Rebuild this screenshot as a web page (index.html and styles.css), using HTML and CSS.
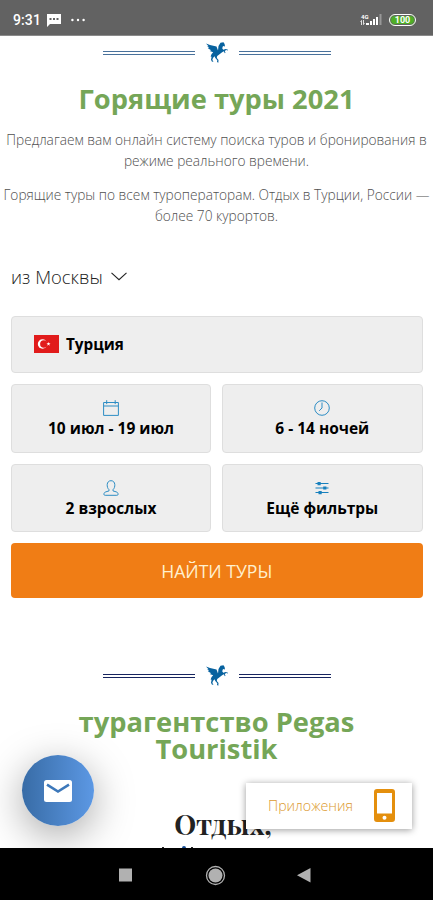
FILE: index.html
```html
<!DOCTYPE html>
<html lang="ru">
<head>
<meta charset="utf-8">
<meta name="viewport" content="width=device-width, initial-scale=1">
<title>Горящие туры 2021</title>
<link rel="stylesheet" href="styles.css">
</head>
<body>
<svg class="defs" aria-hidden="true">
  <symbol id="pegasus" viewBox="0 0 22 22">
    <path d="M0 1.500 4 3l6.500 1.500 1.500 4L12.500 4 14.500.8 17.500.2 18.600 2l.4 2.500-2-.5-.8 2.200 1 1.600 2.500-.9 2.300.9-.2.8-1.500-.5-1.600 1 .8 1.600-.6.5-1.300-2-1.800 1.300-2.600 2.100-2 1.400-.4 2.100 1.700 1.800-.2 2.800-1.300-.8.3-1.700-2-2.100-.8-1.800-1.500 1.800-.7 2 1.200 1.300-1.500.3-1-1.900.6-3-1-.3 1-2.500 1.600-1.800-3.500-1.300 1.500-.6-3.500-2.100 1.500-.3L1.200 4.500l1.300-.2z"/>
  </symbol>
</svg>
<div class="phone">
  <header class="status">
    <span class="time">9:31</span>
    <svg class="bubble" viewBox="0 0 14 13"><path fill="#fff" d="M0 0h14v10H3L0 13z"/><path fill="#626262" d="M2.500 4h2v2h-2zm3.500 0h2v2H6zm3.500 0h2v2h-2z"/></svg>
    <svg class="dots" viewBox="0 0 14 4" fill="#fff"><circle cx="1.400" cy="2" r="1.200"/><circle cx="7" cy="2" r="1.200"/><circle cx="12.600" cy="2" r="1.200"/></svg>
    <div class="network"><span>4G</span><svg viewBox="0 0 5 5" stroke="#fff" stroke-width=".8" fill="none"><path d="M1.500 5V.5L.4 1.600M3.500 0v4.500l1.100-1.100"/></svg></div>
    <svg class="signal" viewBox="0 0 16 12" fill="#fff"><path d="M0 9h3v2H0zM4 7h2v4H4zM7 5h2v6H7zM10 3h2v8h-2z"/><path opacity=".35" d="M13.500 0h2v11h-2z"/></svg>
    <span class="battery">100</span>
  </header>

  <main class="page">
    <div class="divider soft"><i></i><svg><use href="#pegasus"/></svg><i></i></div>
    <h1 class="title">Горящие туры 2021</h1>
    <p class="lead first">Предлагаем вам онлайн систему поиска туров и бронирования в<br>режиме реального времени.</p>
    <p class="lead second">Горящие туры по всем туроператорам. Отдых в Турции, России —<br>более 70 курортов.</p>

    <div class="from"><span>из Москвы</span><svg viewBox="0 0 16 9" fill="none" stroke="#222" stroke-width="1.100"><path d="M.5.8 8 7.700 15.500.8"/></svg></div>

    <section class="search">
      <div class="field country">
        <svg class="flag" viewBox="0 0 25 18"><path fill="#e11b1b" d="M0 0h25v18H0z"/><circle cx="8.500" cy="9" r="4.700" fill="#fff"/><circle cx="9.900" cy="9" r="3.800" fill="#e11b1b"/><path fill="#fff" d="m14.500 6.900.5 1.400h1.500l-1.200.9.500 1.500-1.300-.9-1.300.9.500-1.500-1.200-.9H14z"/></svg>
        <b>Турция</b>
      </div>
      <div class="field option">
        <svg class="icon" viewBox="0 0 16 16"><path d="M.6 2.500h14.800v12.900H.6zM.6 6h14.800M3.700.2v3.900M12.200.2v3.900"/></svg>
        <b>10 июл - 19 июл</b>
      </div>
      <div class="field option">
        <svg class="icon" viewBox="0 0 16 16"><circle cx="8" cy="8" r="7.300"/><path d="M8 2.500V8L5.200 10.800"/></svg>
        <b>6 - 14 ночей</b>
      </div>
      <div class="field option">
        <svg class="icon" viewBox="0 0 16 16"><path d="M6 9.700C3.400 7.500 3.200.7 8 .7s4.600 6.800 2 9v1.200l3.300 1c1.500.5 1.800 1.600 1.800 2.400 0 .7-.5 1-1.300 1H2.200c-.8 0-1.300-.3-1.300-1 0-.8.3-1.900 1.800-2.400l3.300-1z"/></svg>
        <b>2 взрослых</b>
      </div>
      <div class="field option">
        <svg class="icon filters" viewBox="0 0 16 16"><path d="M1.500 3.500h13M1.500 8h13M1.500 12.500h13"/><path class="knob" d="M3.500 2h3.200v3.200H3.500zm5.700 4.400h3.200v3.200H9.200zM4.500 11h3.200v3.200H4.500z"/></svg>
        <b>Ещё фильтры</b>
      </div>
      <button class="find">НАЙТИ ТУРЫ</button>
    </section>

    <div class="divider lower"><i></i><svg><use href="#pegasus"/></svg><i></i></div>
    <h2 class="title agency">турагентство Pegas<br>Touristik</h2>
    <div class="rest">Отдых,</div>
    <svg class="peek" viewBox="0 0 32 3"><path fill="#222" d="M0 2h2v1H0zM29 2h2v1h-2z"/><path fill="#124a94" d="M20 3a2 2 0 0 1 4 0z"/></svg>

    <button class="mail" aria-label="Почта"><svg viewBox="0 0 28 22"><rect width="28" height="22" rx="2.500" fill="#fff"/><path d="M3 4.700 14 11.500 25 4.700" fill="none" stroke="#3d78ba" stroke-width="2.600"/></svg></button>
    <div class="apps"><span>Приложения</span><svg viewBox="0 0 21 33"><path fill="#e48f0d" fill-rule="evenodd" d="M3 0h15a3 3 0 0 1 3 3v27a3 3 0 0 1-3 3H3a3 3 0 0 1-3-3V3a3 3 0 0 1 3-3zm0 4v20.500h15V4zm7.500 22.700a2 2 0 1 0 0 4 2 2 0 0 0 0-4z"/></svg></div>
  </main>

  <nav class="nav">
    <svg viewBox="0 0 433 52" fill="#b1b1b1"><path d="M119 20.500h13v13h-13zM310.500 20v14.500L297 27.200z"/><circle cx="215.500" cy="27.500" r="7"/><circle cx="215.500" cy="27.500" r="9" fill="none" stroke="#b1b1b1" stroke-width="1.300"/></svg>
  </nav>
</div>
</body>
</html>
```
FILE: styles.css
```css
* { box-sizing: border-box; }
body { margin: 0; background: #fff; font-family: "Open Sans", "Noto Sans", sans-serif; }
h1, h2, p { margin: 0; }
button { border: 0; padding: 0; font-family: inherit; }
svg { display: block; flex: none; }
.defs { position: absolute; width: 0; height: 0; }
.phone { width: 433px; height: 900px; display: flex; flex-direction: column; overflow: hidden; }

.status { height: 36px; flex: none; display: flex; align-items: center; padding: 5px 17px 0 13px; background: #626262; color: #fff; border-bottom: 1px solid #8a8a8a; }
.time { width: 34px; font: 500 14px/16px Roboto, sans-serif; letter-spacing: .1px; }
.bubble { width: 14px; height: 13px; margin-top: 1px; }
.dots { width: 14px; height: 4px; margin: -1px 0 0 10px; }
.network { margin: -2px 0 0 auto; width: 10px; display: flex; flex-direction: column; align-items: flex-start; font: 700 6px/7px Roboto, sans-serif; }
.network span { margin-left: 1px; }
.network svg { width: 5px; height: 5px; }
.signal { width: 16px; height: 12px; margin-left: -4px; }
.battery { width: 27px; height: 12px; margin-left: 7px; border: 1px solid #fff; border-radius: 6px; background: #4fae27; box-shadow: inset 0 0 0 1px #626262; font: 700 9px/10px Roboto, sans-serif; text-align: center; }

.page { position: relative; flex: 1; min-height: 0; overflow: hidden; }
.divider { display: flex; justify-content: center; align-items: center; gap: 11px; width: 228px; height: 22px; margin: 6px auto 0 103px; }
.divider i { flex: 1; height: 4px; border: solid #16245f; border-width: 1px 0; }
.divider svg { width: 22px; height: 22px; fill: #07629f; }
.soft i { border-color: #49719b; }
.title { color: #75a657; font-size: 27.300px; font-weight: 700; line-height: 27px; text-align: center; white-space: nowrap; }
h1.title { margin-top: 21px; }
.lead { color: #505050; font-size: 13.700px; font-weight: 300; line-height: 20.500px; text-align: center; white-space: nowrap; }
.first { margin-top: 18px; }
.second { margin-top: 14px; }
.from { display: flex; align-items: center; gap: 8px; margin: 38px 0 0 11px; height: 25px; color: #222; font-size: 18.400px; font-weight: 300; }
.from svg { width: 16px; height: 9px; }

.search { display: grid; grid-template-columns: 200px 200.500px; gap: 11px; margin: 27px 0 0 11px; }
.field { border: 1px solid #dedede; border-radius: 4px; background: #eee; color: #000; }
.field b { font-size: 15.500px; font-weight: 700; line-height: 20px; white-space: nowrap; }
.country { grid-column: 1 / -1; height: 57px; display: flex; align-items: center; gap: 7px; padding: 0 0 2px 22px; }
.flag { width: 25px; height: 18px; }
.country b { font-size: 15.300px; }
.option { height: 68.500px; display: flex; flex-direction: column; align-items: center; padding-top: 15px; gap: 2px; }
.icon { width: 16px; height: 16px; fill: none; stroke: #2d8dc4; stroke-width: 1; }
.filters { stroke: #1780bd; stroke-width: 1.200; }
.filters .knob { fill: #1780bd; stroke: none; }
.find { grid-column: 1 / -1; height: 55px; border-radius: 4px; background: #f07d15; color: #fff0cf; font-size: 17.600px; }

.lower { margin-top: 67px; }
.agency { margin-top: 21px; }
.rest { margin: 45px 0 0 13px; text-align: center; color: #222; font: 700 27.700px/34px "Playfair Display", "Liberation Serif", serif; }
.peek { width: 32px; height: 3px; margin: 4px 0 0 162px; }

.mail { position: absolute; left: 22px; top: 719px; width: 72px; height: 71px; display: grid; place-items: center; border-radius: 50%; background: linear-gradient(90deg, #386ca6, #5c98e4); box-shadow: 0 10px 40px rgba(0, 0, 0, .35); }
.mail svg { width: 28px; height: 22px; }
.apps { position: absolute; left: 246px; top: 747px; width: 166px; height: 46px; display: flex; align-items: center; justify-content: space-between; padding: 0 17px 1px 22px; background: #fff; color: #dc9a30; font-size: 14.200px; font-weight: 300; box-shadow: 0 1px 7px rgba(0, 0, 0, .4); }
.apps svg { width: 21px; height: 33px; }
.nav { height: 52px; flex: none; background: #000; }
.nav svg { width: 433px; height: 52px; }
```
